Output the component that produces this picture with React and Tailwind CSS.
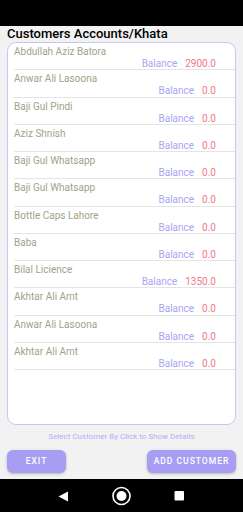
import React from 'react';

const customers = [
  { name: 'Abdullah Aziz Batora', balance: '2900.0' },
  { name: 'Anwar Ali Lasoona', balance: '0.0' },
  { name: 'Baji Gul Pindi', balance: '0.0' },
  { name: 'Aziz Shnish', balance: '0.0' },
  { name: 'Baji Gul Whatsapp', balance: '0.0' },
  { name: 'Baji Gul Whatsapp', balance: '0.0' },
  { name: 'Bottle Caps Lahore', balance: '0.0' },
  { name: 'Baba', balance: '0.0' },
  { name: 'Bilal Licience', balance: '1350.0' },
  { name: 'Akhtar Ali Amt', balance: '0.0' },
  { name: 'Anwar Ali Lasoona', balance: '0.0' },
  { name: 'Akhtar Ali Amt', balance: '0.0' },
];

function CustomerRow({ customer }) {
  return (
    <div className="ml-[6px] h-[27.25px] border-b border-[#e4e4e4] pt-[3px] box-border">
      <div className="text-[10px] leading-[12px] text-[#a5a188]">{customer.name}</div>
      <div className="flex justify-end gap-[8px] pr-[19px] text-[10px] leading-[12px]">
        <span className="text-[#aaa4f4]">Balance</span>
        <span className="text-[#f2788a]">{customer.balance}</span>
      </div>
    </div>
  );
}

export default function App() {
  return (
    <div className="w-[243px] h-[512px] flex flex-col bg-[#f2f2f2] font-['Roboto',sans-serif] overflow-hidden">
      <div className="h-[26px] bg-black shrink-0" />

      <div className="h-[16px] px-[7px] text-[13px] leading-[16px] font-medium text-black">
        Customers Accounts/Khata
      </div>

      <div className="mx-[7px] h-[383px] bg-white border border-[#c9c5f7] rounded-[9px] overflow-hidden">
        {customers.map((c, i) => (
          <CustomerRow key={i} customer={c} />
        ))}
      </div>

      <div className="mt-[6px] text-center text-[8px] leading-[12px] text-[#b3aef5]">
        Select Customer By Click to Show Details
      </div>

      <div className="mt-[7px] px-[7px] flex justify-between">
        <button className="w-[59px] h-[23px] rounded-[6px] bg-[#a79df2] text-white text-[8.5px] font-medium tracking-[1px] shadow-[0_1px_3px_rgba(0,0,0,0.25)]">
          EXIT
        </button>
        <button className="w-[89px] h-[23px] rounded-[6px] bg-[#a79df2] text-white text-[8.5px] font-medium tracking-[1px] shadow-[0_1px_3px_rgba(0,0,0,0.25)]">
          ADD CUSTOMER
        </button>
      </div>

      <div className="mt-auto h-[33px] bg-black shrink-0 flex items-center">
        <svg width="243" height="33" viewBox="0 0 243 33">
          <polygon points="68,12.5 68,22.5 58.5,17.5" fill="white" />
          <circle cx="121.5" cy="17" r="8.5" fill="none" stroke="white" strokeWidth="1.6" />
          <circle cx="121.5" cy="17" r="5" fill="white" />
          <rect x="174.5" y="12" width="9.5" height="9.5" rx="1" fill="white" />
        </svg>
      </div>
    </div>
  );
}
